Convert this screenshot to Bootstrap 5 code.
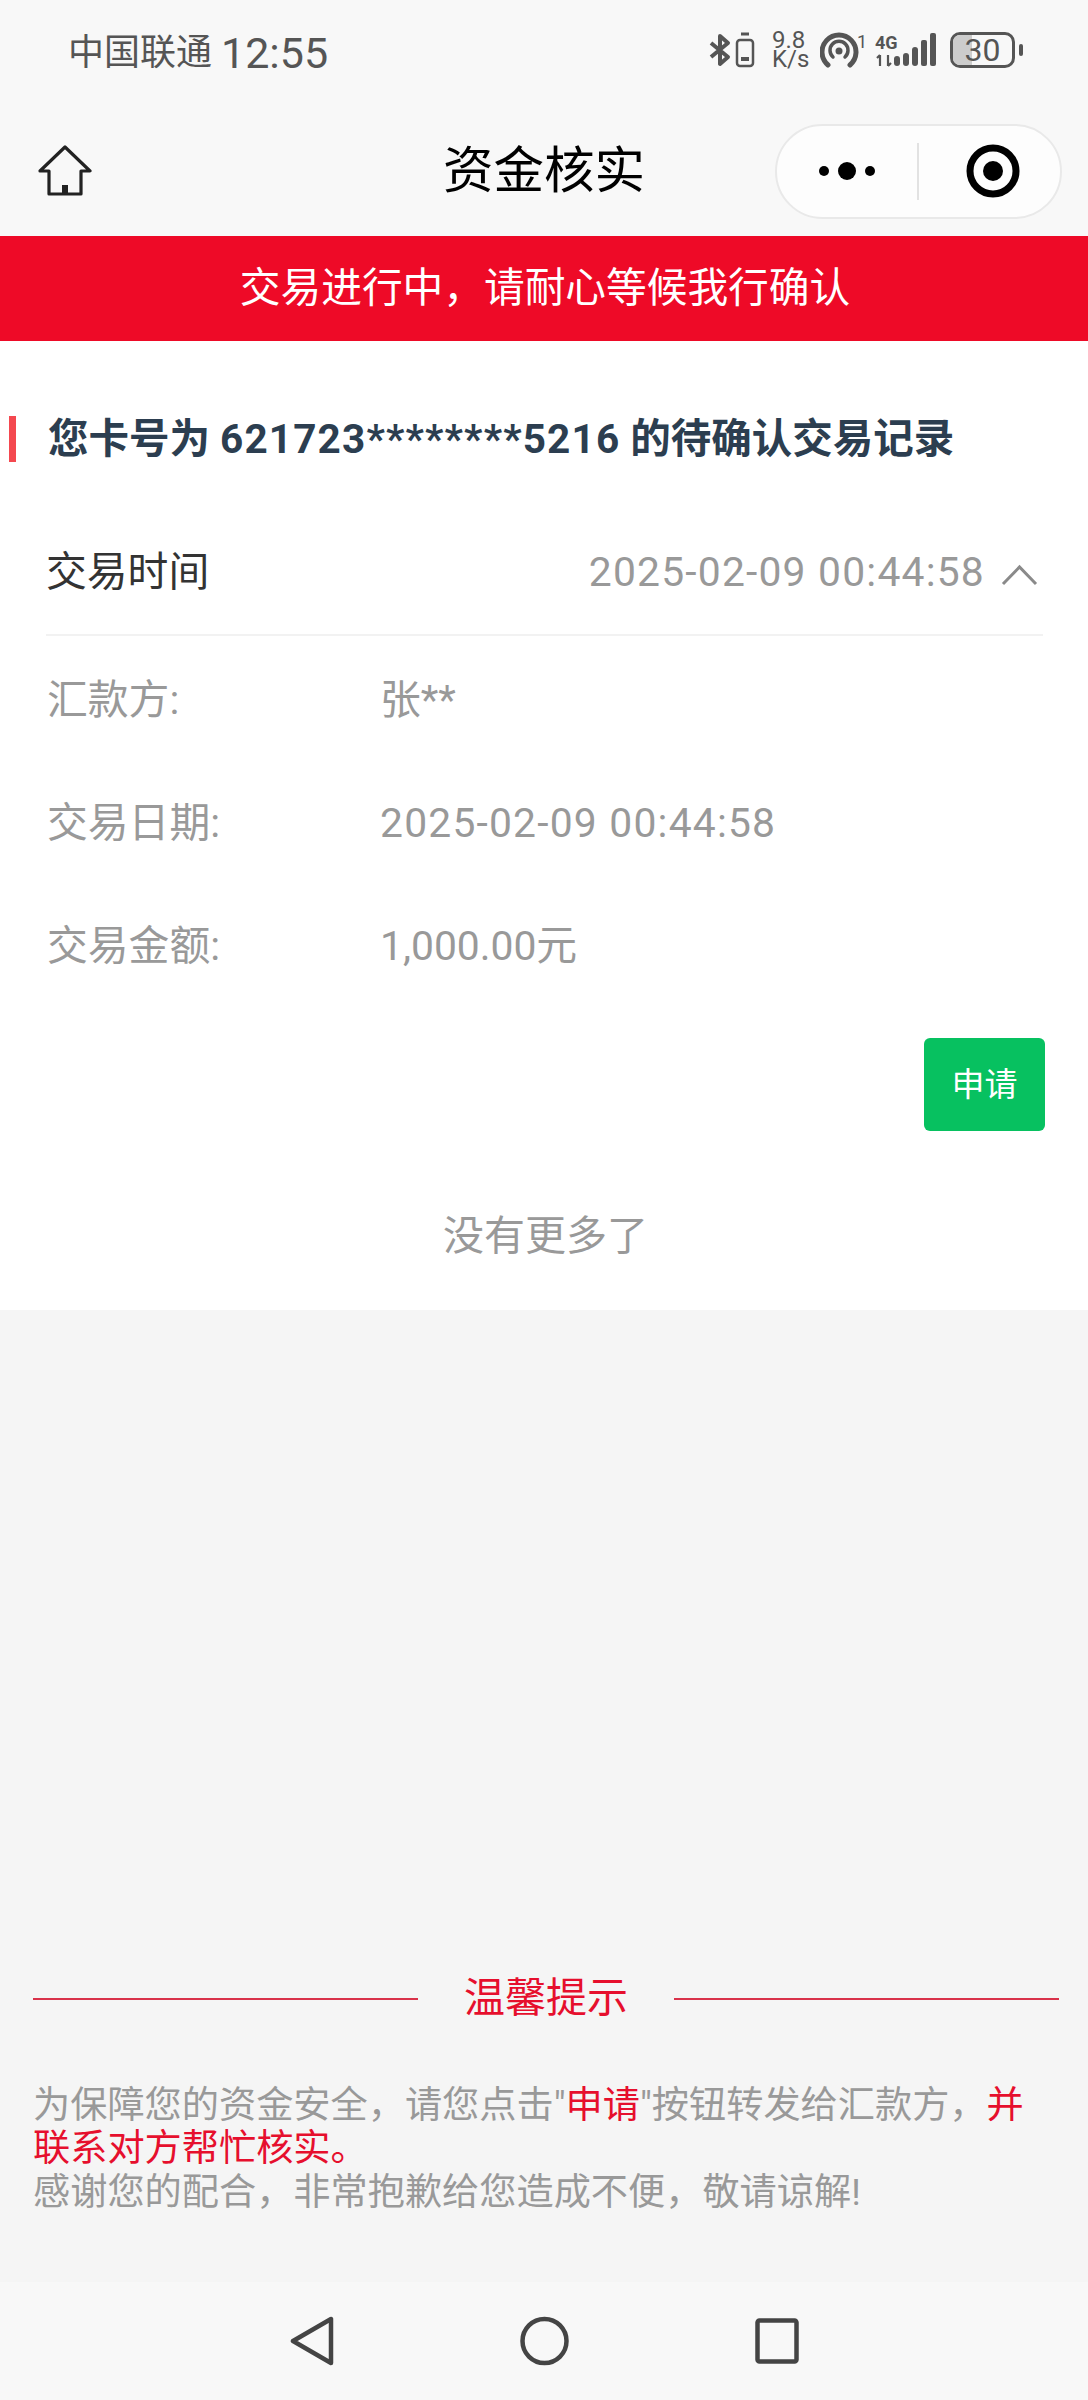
<!DOCTYPE html>
<html lang="zh-CN">
<head>
    <meta charset="UTF-8">
    <meta name="viewport" content="width=device-width, initial-scale=1.0">
    <title>资金核实</title>
    <link href="https://cdn.jsdelivr.net/npm/bootstrap@5.3.0/dist/css/bootstrap.min.css" rel="stylesheet">
    <style>
        body {
            font-family: "Roboto", "Noto Sans CJK SC", sans-serif;
            background-color: #f5f5f5;
        }
        .phone-page { width: 1088px; height: 2400px; }
        .status-bar { height: 100px; background: #f8f8f8; padding: 0 65px 0 68px; color: #555; }
        .status-left { padding-top: 6px; }
        .carrier { font-size: 36px; line-height: 1; }
        .clock { font-size: 43px; line-height: 1; margin-left: 9px; }
        .speed-text { font-size: 24px; line-height: 19px; width: 33px; margin: 0 15px 0 17px; text-align: center; }
        .batt-box { width: 65px; height: 36px; border: 3px solid #555; border-radius: 10px; margin-left: 13px; font-size: 32px; overflow: hidden; }
        .batt-fill { left: 0; top: 0; bottom: 0; width: 19px; background: #ccc; }
        .batt-num { line-height: 1; z-index: 1; }
        .batt-nub { width: 4px; height: 12px; background: #555; border-radius: 2px; margin-left: 4px; }
        .top-nav { height: 136px; background: #f8f8f8; padding: 6px 26px 0 38px; }
        .nav-title { left: 0; right: 0; top: 6px; bottom: 0; font-size: 50.5px; color: #000; }
        .capsule { width: 287px; height: 95px; background: #fdfdfd; border: 2px solid #e9e9e9; border-radius: 48px; z-index: 1; }
        .capsule-half { width: 143px; height: 100%; }
        .capsule-target { padding-left: 6px; }
        .capsule-line { width: 2px; height: 57px; background: #e2e2e2; }
        .notice-bar { height: 105px; padding-left: 2px; background: #ee0a27; color: #fff; font-size: 40.7px; }
        .record-panel { height: 969px; background: #fff; padding-top: 75px; }
        .record-title { height: 46px; border-left: 7px solid #f4484f; margin-left: 9px; padding-left: 32px; font-size: 40.5px; font-weight: 700; color: #2c3e50; }
        .card-digits { letter-spacing: 1.15px; }
        .record-head { height: 131px; margin: 43px 45px 0 46px; padding-top: 6px; border-bottom: 2px solid #f2f2f2; font-size: 40.8px; color: #333; }
        .record-date { color: #999; letter-spacing: 1.2px; }
        .record-arrow { margin: 4px 5px 0 16px; }
        .detail-row { height: 123px; padding-top: 6px; margin-left: 47px; font-size: 40.8px; color: #999; }
        .detail-label { width: 333px; }
        .date-text { letter-spacing: 1.2px; }
        .apply-wrap { padding: 33px 43px 0 0; }
        .apply-btn { width: 121px; height: 93px; background: #07c160; color: #fff; border: 0; border-radius: 6px; font-size: 33px; padding: 0; }
        .no-more { margin-top: 64px; padding-left: 3px; font-size: 41px; line-height: 82px; color: #999; }
        .tip-block { padding: 0 29px 68px 33px; }
        .tip-head { height: 50px; font-size: 41px; color: #e60f2d; }
        .tip-rule { height: 2px; width: 385px; background: #d9324a; }
        .tip-label { width: 255px; }
        .tip-text { margin-top: 60px; font-size: 37.2px; line-height: 43.5px; color: #999; }
        .tip-red { color: #e60f2d; }
        .sys-nav { height: 118px; background: #f8f8f8; gap: 186px; }
    </style>
</head>
<body>

<div class="phone-page d-flex flex-column">
    <!-- status bar -->
    <div class="status-bar d-flex align-items-center justify-content-between flex-shrink-0">
        <div class="status-left d-flex align-items-center">
            <span class="carrier">中国联通</span>
            <span class="clock">12:55</span>
        </div>
        <div class="d-flex align-items-center">
            <svg width="22" height="34" viewBox="0 0 22 34" fill="none" stroke="#555" stroke-width="4" stroke-linejoin="round"><path d="M2 10 L19 24 L11 31 V3 L19 10 L2 24"/></svg>
            <svg class="ms-1" width="20" height="36" viewBox="0 0 20 36" fill="none"><path d="M6 2h8" stroke="#555" stroke-width="3"/><rect x="2" y="8" width="16" height="26" rx="3" stroke="#555" stroke-width="2.5"/><rect x="6" y="25" width="8" height="4" fill="#555"/></svg>
            <div class="speed-text">9.8<br>K/s</div>
            <svg width="47" height="36" viewBox="0 0 47 36" fill="none" stroke="#555" stroke-linecap="round">
                <path d="M8 33 A17 17 0 1 1 30 33" stroke-width="5"/>
                <path d="M13 25 A9 9 0 1 1 25 25" stroke-width="3.5"/>
                <circle cx="19" cy="19" r="3.5" fill="#555" stroke="none"/>
                <text x="37" y="16" font-size="18" font-family="Roboto" fill="#555" stroke="none">1</text>
            </svg>
            <svg class="ms-2" width="62" height="36" viewBox="0 0 62 36" fill="#555">
                <text x="0" y="17" font-size="18" font-weight="700" font-family="Roboto">4G</text>
                <path d="M5 23v11M2 26l3-3M13 23v11M16 31l-3 3" stroke="#555" stroke-width="2.2" fill="none"/>
                <rect x="19" y="24" width="6" height="10" rx="3"/>
                <rect x="28" y="21" width="6" height="13" rx="3"/>
                <rect x="37" y="15" width="6" height="19" rx="3"/>
                <rect x="46" y="8" width="6" height="26" rx="2"/>
                <rect x="55" y="1" width="6" height="33" rx="2"/>
            </svg>
            <div class="batt-box position-relative d-flex align-items-center justify-content-center">
                <div class="batt-fill position-absolute"></div>
                <span class="batt-num position-relative">30</span>
            </div>
            <div class="batt-nub"></div>
        </div>
    </div>

    <!-- title bar -->
    <div class="top-nav position-relative d-flex align-items-center justify-content-between flex-shrink-0">
        <svg class="position-relative" width="54" height="52" viewBox="0 0 54 52" fill="none" stroke="#222" stroke-width="3.2" stroke-linejoin="round">
            <path d="M27 2 L52 26 L43 26 V49 H11 V26 L2 26 Z"/>
            <path d="M24 49 V40 H30 V49 Z" fill="#222" stroke="none"/>
        </svg>
        <div class="nav-title position-absolute d-flex align-items-center justify-content-center">资金核实</div>
        <div class="capsule d-flex align-items-center">
            <div class="capsule-half d-flex align-items-center justify-content-center">
                <svg width="58" height="20" viewBox="0 0 58 20" fill="#000"><circle cx="6" cy="10" r="5"/><circle cx="29" cy="10" r="9"/><circle cx="52" cy="10" r="5"/></svg>
            </div>
            <div class="capsule-line"></div>
            <div class="capsule-half capsule-target d-flex align-items-center justify-content-center">
                <svg width="54" height="54" viewBox="0 0 54 54"><circle cx="27" cy="27" r="23" fill="none" stroke="#000" stroke-width="7"/><circle cx="27" cy="27" r="10"/></svg>
            </div>
        </div>
    </div>

    <div class="notice-bar d-flex align-items-center justify-content-center flex-shrink-0">交易进行中，请耐心等候我行确认</div>

    <!-- record -->
    <div class="record-panel flex-shrink-0">
        <div class="record-title d-flex align-items-center"><span>您卡号为 <span class="card-digits">621723********5216</span> 的待确认交易记录</span></div>
        <div class="record-head d-flex align-items-center justify-content-between">
            <span>交易时间</span>
            <span class="d-flex align-items-center">
                <span class="record-date">2025-02-09 00:44:58</span>
                <svg class="record-arrow" width="37" height="22" viewBox="0 0 37 22" fill="none" stroke="#8a8a8a" stroke-width="3"><path d="M2 20 L18.5 3 L35 20"/></svg>
            </span>
        </div>
        <div class="detail-row d-flex align-items-center"><span class="detail-label">汇款方:</span><span>张**</span></div>
        <div class="detail-row d-flex align-items-center"><span class="detail-label">交易日期:</span><span class="date-text">2025-02-09 00:44:58</span></div>
        <div class="detail-row d-flex align-items-center"><span class="detail-label">交易金额:</span><span>1,000.00元</span></div>
        <div class="apply-wrap d-flex justify-content-end">
            <button class="btn apply-btn" type="button">申请</button>
        </div>
        <div class="no-more text-center">没有更多了</div>
    </div>

    <!-- tips -->
    <div class="tip-block mt-auto">
        <div class="tip-head d-flex align-items-center justify-content-between">
            <div class="tip-rule"></div>
            <div class="tip-label text-center">温馨提示</div>
            <div class="tip-rule"></div>
        </div>
        <div class="tip-text">为保障您的资金安全，请您点击"<span class="tip-red">申请</span>"按钮转发给汇款方，<span class="tip-red">并联系对方帮忙核实。</span><br>感谢您的配合，非常抱歉给您造成不便，敬请谅解!</div>
    </div>

    <!-- system nav -->
    <div class="sys-nav d-flex align-items-center justify-content-center flex-shrink-0">
        <svg width="44" height="50" viewBox="0 0 44 50" fill="none" stroke="#444" stroke-width="4.5" stroke-linejoin="round"><path d="M41 3 V47 L3 25 Z"/></svg>
        <svg width="49" height="50" viewBox="0 0 49 50" fill="none" stroke="#444" stroke-width="4.5"><circle cx="24.5" cy="25" r="22"/></svg>
        <svg width="44" height="46" viewBox="0 0 44 46" fill="none" stroke="#444" stroke-width="4.5" stroke-linejoin="round"><rect x="2.5" y="2.5" width="39" height="41" rx="2"/></svg>
    </div>
</div>

<script src="https://cdn.jsdelivr.net/npm/bootstrap@5.3.0/dist/js/bootstrap.bundle.min.js"></script>
</body>
</html>
